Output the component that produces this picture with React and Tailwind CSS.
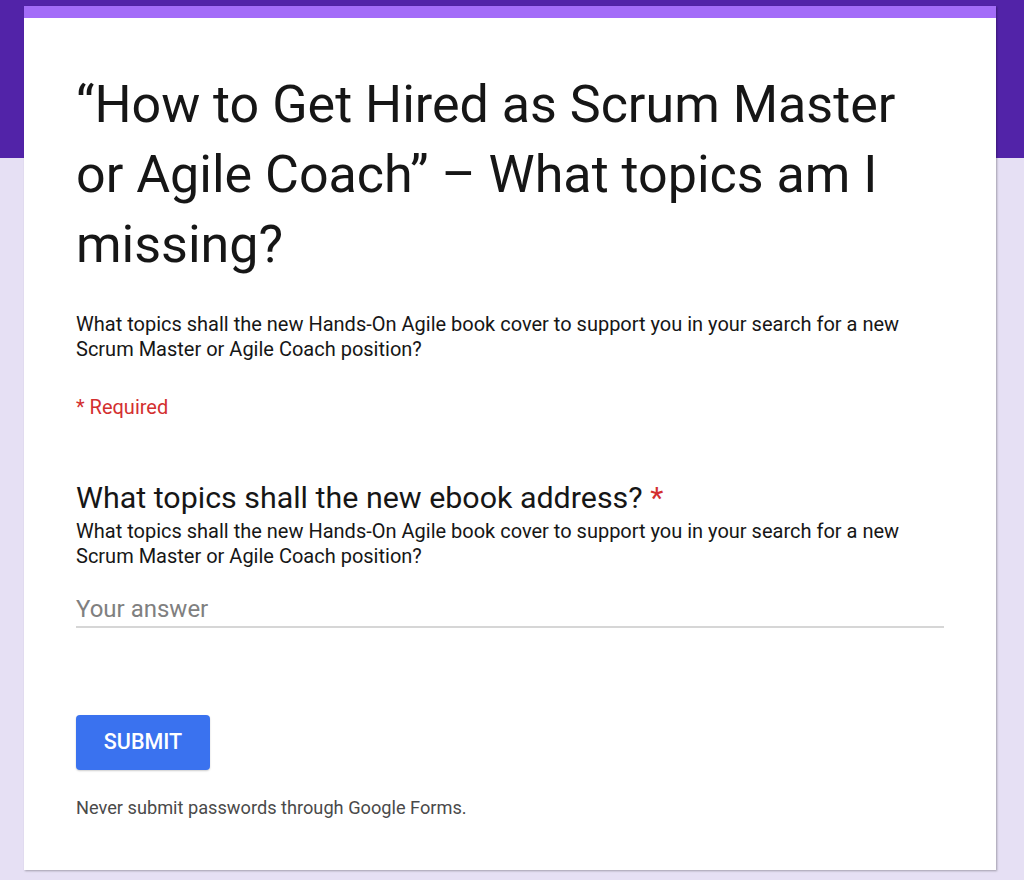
export default function App() {
  return (
    <div
      className="w-[1024px] h-[880px] overflow-hidden bg-[linear-gradient(to_bottom,#5223a8_0px,#5223a8_158px,#e6e0f4_158px,#e6e0f4_100%)] pt-[6px] pl-[24px]"
      style={{ fontFamily: "Roboto, 'Liberation Sans', sans-serif" }}
    >
      <div className="bg-white w-[972px] h-[864px] border-t-[12px] border-[#a36cf8] shadow-[1px_1px_2px_rgba(0,0,0,0.3)] px-[52px] pt-[52px]">
        <h1 className="text-[52px] leading-[70px] text-[#161616] font-normal pr-[18px]">
          “How to Get Hired as Scrum Master or Agile Coach” – What topics am I missing?
        </h1>
        <p className="mt-[32px] text-[20px] leading-[25px] text-[#161616] pr-[40px]">
          What topics shall the new Hands-On Agile book cover to support you in your search for a new Scrum Master or Agile Coach position?
        </p>
        <p className="mt-[33px] text-[20px] leading-[25px] text-[#d32f2f]">* Required</p>

        <div className="mt-[60px]">
          <div className="text-[30.4px] leading-[36px] text-[#161616]">
            What topics shall the new ebook address? <span className="text-[#d32f2f]">*</span>
          </div>
          <p className="mt-[3px] text-[20px] leading-[25px] text-[#161616] pr-[40px]">
            What topics shall the new Hands-On Agile book cover to support you in your search for a new Scrum Master or Agile Coach position?
          </p>
          <div className="mt-[26px] w-[868px] border-b-2 border-[#d6d6d6] pb-[3px] text-[24px] leading-[28px] text-[#808080]">
            Your answer
          </div>
        </div>

        <button className="mt-[87px] w-[134px] h-[55px] rounded-[4px] bg-[#3a72ef] text-white text-[21.5px] font-medium shadow-[0_1px_2px_rgba(0,0,0,0.2)]">
          SUBMIT
        </button>
        <p className="mt-[27px] text-[18.2px] leading-[22px] text-[#4a4a4a]">
          Never submit passwords through Google Forms.
        </p>
      </div>
    </div>
  );
}
